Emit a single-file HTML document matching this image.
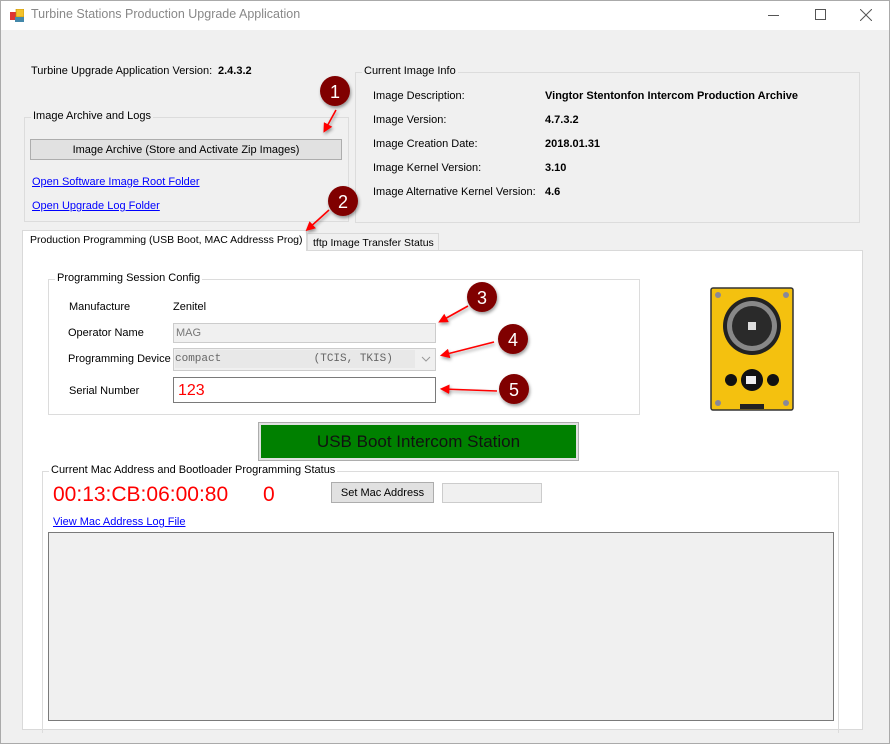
<!DOCTYPE html>
<html><head><meta charset="utf-8"><style>
*{box-sizing:border-box;margin:0;padding:0}
body{width:890px;height:744px;overflow:hidden;background:#f0f0f0;font-family:"Liberation Sans",sans-serif;font-size:11px;line-height:15px;color:#000;position:relative}
.a{position:absolute;white-space:nowrap}
.gb{position:absolute;border:1px solid #dcdcdc}
.gl{position:absolute;background:#f0f0f0;padding:0 2px;top:-9px;left:6px;white-space:nowrap}
.lnk{color:#0000ff;text-decoration:underline}
.b{font-weight:bold}
</style></head><body>
<div class="a" style="left:0;top:0;width:890px;height:30px;background:#fff;border-top:1px solid #aaa"></div>
<div class="a" style="left:889px;top:0;width:1px;height:744px;background:#aaa"></div>
<div class="a" style="left:0;top:743px;width:890px;height:1px;background:#aaa"></div>
<div class="a" style="left:0;top:0;width:1px;height:744px;background:#aaa"></div>
<svg class="a" style="left:10px;top:9px" width="14" height="14"><rect x="0" y="3" width="7" height="8" fill="#d33"/><rect x="6" y="0" width="8" height="8" fill="#f3c22c" stroke="#b80" stroke-width=".6"/><rect x="5" y="8" width="9" height="5" fill="#48a"/></svg>
<div class="a" style="left:31px;top:7px;font-size:12.5px;color:#888">Turbine Stations Production Upgrade Application</div>
<div class="a" style="left:768px;top:15px;width:11px;height:1px;background:#555"></div>
<div class="a" style="left:815px;top:9px;width:11px;height:11px;border:1px solid #555"></div>
<svg class="a" style="left:860px;top:9px" width="12" height="12"><path d="M0 0L12 12M12 0L0 12" stroke="#555" stroke-width="1"/></svg>

<div class="a" style="left:31px;top:64px">Turbine Upgrade Application Version:</div>
<div class="a b" style="left:218px;top:64px">2.4.3.2</div>

<div class="gb" style="left:24px;top:117px;width:325px;height:105px"><span class="gl">Image Archive and Logs</span></div>
<div class="a" style="left:30px;top:139px;width:312px;height:21px;background:#e1e1e1;border:1px solid #adadad;text-align:center;line-height:20px">Image Archive (Store and Activate Zip Images)</div>
<div class="a lnk" style="left:32px;top:175px">Open Software Image Root Folder</div>
<div class="a lnk" style="left:32px;top:199px">Open Upgrade Log Folder</div>

<div class="gb" style="left:355px;top:72px;width:505px;height:151px"><span class="gl">Current Image Info</span></div>
<div class="a" style="left:373px;top:89px">Image Description:</div>
<div class="a" style="left:373px;top:113px">Image Version:</div>
<div class="a" style="left:373px;top:137px">Image Creation Date:</div>
<div class="a" style="left:373px;top:161px">Image Kernel Version:</div>
<div class="a" style="left:373px;top:185px">Image Alternative Kernel Version:</div>
<div class="a b" style="left:545px;top:89px">Vingtor Stentonfon Intercom Production Archive</div>
<div class="a b" style="left:545px;top:113px">4.7.3.2</div>
<div class="a b" style="left:545px;top:137px">2018.01.31</div>
<div class="a b" style="left:545px;top:161px">3.10</div>
<div class="a b" style="left:545px;top:185px">4.6</div>

<div class="a" style="left:22px;top:250px;width:841px;height:480px;background:#fff;border:1px solid #d9d9d9"></div>
<div class="a" style="left:307px;top:233px;width:132px;height:18px;background:#f0f0f0;border:1px solid #d9d9d9;padding:2px 0 0 5px;font-size:10.5px">tftp Image Transfer Status</div>
<div class="a" style="left:22px;top:230px;width:285px;height:21px;background:#fff;border:1px solid #d9d9d9;border-bottom:none;padding:2px 0 0 7px;font-size:10.5px">Production Programming (USB Boot, MAC Addresss Prog)</div>

<div class="gb" style="left:48px;top:279px;width:592px;height:136px"><span class="gl" style="background:#fff">Programming Session Config</span></div>
<div class="a" style="left:69px;top:300px">Manufacture</div>
<div class="a" style="left:173px;top:300px">Zenitel</div>
<div class="a" style="left:68px;top:326px">Operator Name</div>
<div class="a" style="left:173px;top:323px;width:263px;height:20px;background:#f0f0f0;border:1px solid #ccc;color:#777;padding:2px 0 0 2px">MAG</div>
<div class="a" style="left:68px;top:352px">Programming Device</div>
<div class="a" style="left:173px;top:348px;width:263px;height:23px;background:#f0f0f0;border:1px solid #ccc"></div>
<div class="a" style="left:175px;top:350px;width:240px;height:18px;background:#e8e8e8;font-family:'Liberation Mono',monospace;font-size:11px;color:#666;padding-top:2px">compact&nbsp;&nbsp;&nbsp;&nbsp;&nbsp;&nbsp;&nbsp;&nbsp;&nbsp;&nbsp;&nbsp;&nbsp;&nbsp;&nbsp;(TCIS, TKIS)</div>
<svg class="a" style="left:421px;top:356px" width="10" height="6"><path d="M1 1L5 5L9 1" stroke="#999" fill="none"/></svg>
<div class="a" style="left:69px;top:384px">Serial Number</div>
<div class="a" style="left:173px;top:377px;width:263px;height:26px;background:#fff;border:1px solid #7a7a7a;color:#f00;font-size:16px;padding:3px 0 0 4px;line-height:19px">123</div>

<svg class="a" style="left:708px;top:286px" width="88" height="126">
<rect x="3" y="2" width="82" height="122" rx="2" fill="#f4c10f" stroke="#333" stroke-width="1.5"/>
<circle cx="10" cy="9" r="3" fill="#889"/><circle cx="78" cy="9" r="3" fill="#889"/><circle cx="10" cy="117" r="3" fill="#889"/><circle cx="78" cy="117" r="3" fill="#889"/>
<circle cx="44" cy="40" r="29" fill="#222"/><circle cx="44" cy="40" r="25" fill="#888"/><circle cx="44" cy="40" r="20" fill="#2a2a2a"/>
<rect x="40" y="36" width="8" height="8" fill="#ddd"/>
<circle cx="23" cy="94" r="6" fill="#111"/><circle cx="44" cy="94" r="11" fill="#111"/><circle cx="65" cy="94" r="6" fill="#111"/>
<rect x="38" y="90" width="10" height="8" fill="#eee"/>
<rect x="32" y="118" width="24" height="5" fill="#222"/>
</svg>

<div class="a" style="left:258px;top:422px;width:321px;height:39px;border:1px solid #adadad;background:#e1e1e1;padding:2px"><div style="width:100%;height:100%;background:#008000;color:#111;font-size:17px;text-align:center;line-height:33px">USB Boot Intercom Station</div></div>

<div class="gb" style="left:42px;top:471px;width:797px;height:262px;border-bottom:none"><span class="gl" style="background:#fff;left:6px">Current Mac Address and Bootloader Programming Status</span></div>
<div class="a" style="left:53px;top:482px;font-size:21px;line-height:25px;color:#f00">00:13:CB:06:00:80</div>
<div class="a" style="left:263px;top:482px;font-size:21px;line-height:25px;color:#f00">0</div>
<div class="a" style="left:331px;top:482px;width:103px;height:21px;background:#e1e1e1;border:1px solid #adadad;text-align:center;line-height:20px">Set Mac Address</div>
<div class="a" style="left:442px;top:483px;width:100px;height:20px;background:#f0f0f0;border:1px solid #ccc"></div>
<div class="a lnk" style="left:53px;top:515px">View Mac Address Log File</div>
<div class="a" style="left:48px;top:532px;width:786px;height:189px;background:#f0f0f0;border:1px solid #7a7a7a"></div>

<svg class="a" style="left:0;top:0" width="890" height="744">
<defs><marker id="ah" markerWidth="6" markerHeight="6" refX="4" refY="3" orient="auto"><path d="M0 0L6 3L0 6z" fill="#f00"/></marker>
<filter id="sh"><feDropShadow dx="1" dy="2" stdDeviation="1.5" flood-opacity=".4"/></filter></defs>
<g stroke="#f00" stroke-width="1.6" marker-end="url(#ah)" filter="url(#sh)">
<line x1="336" y1="110" x2="325" y2="130"/>
<line x1="329" y1="210" x2="308" y2="229"/>
<line x1="468" y1="306" x2="441" y2="321"/>
<line x1="494" y1="342" x2="443" y2="355"/>
<line x1="497" y1="391" x2="443" y2="389"/>
</g>
<g filter="url(#sh)" fill="#800000">
<circle cx="335" cy="91" r="15"/><circle cx="343" cy="201" r="15"/><circle cx="482" cy="297" r="15"/><circle cx="513" cy="339" r="15"/><circle cx="514" cy="389" r="15"/>
</g>
<g fill="#fff" font-family="Liberation Sans" font-size="18" text-anchor="middle">
<text x="335" y="98">1</text><text x="343" y="208">2</text><text x="482" y="304">3</text><text x="513" y="346">4</text><text x="514" y="396">5</text>
</g>
</svg>
</body></html>
